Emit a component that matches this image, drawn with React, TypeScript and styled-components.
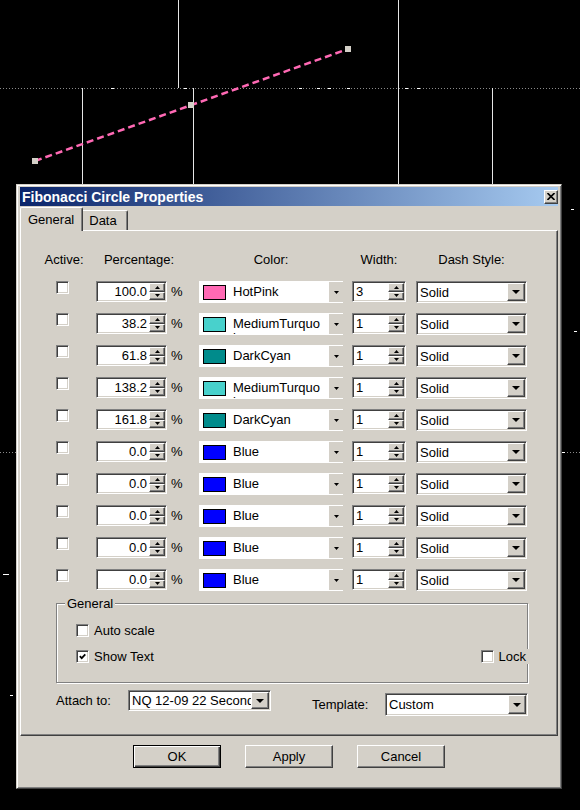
import React from 'react';
import styled, { createGlobalStyle, css } from 'styled-components';

const face = '#d4d0c8';

const GlobalStyle = createGlobalStyle`
  html, body {
    margin: 0;
    padding: 0;
    background: #000;
  }
  body {
    font-family: "Liberation Sans", Arial, sans-serif;
    font-size: 13px;
    color: #000;
  }
`;

const raised = css`
  background: ${face};
  border: 1px solid;
  border-color: #fff #404040 #404040 #fff;
  box-shadow: inset -1px -1px #808080;
`;

const sunken = css`
  background: #fff;
  border: 1px solid;
  border-color: #808080 #fff #fff #808080;
  box-shadow: inset 1px 1px #404040, inset -1px -1px ${face};
`;

const Screen = styled.div`
  position: relative;
  width: 580px;
  height: 810px;
  overflow: hidden;
  background: #000;
`;

const Chart = styled.svg`
  display: block;
`;

const Window = styled.div`
  position: absolute;
  left: 16px;
  top: 184px;
  width: 546px;
  height: 605px;
  box-sizing: border-box;
  display: flex;
  flex-direction: column;
  background: ${face};
  border: 1px solid;
  border-color: ${face} #404040 #404040 ${face};
  box-shadow: inset 1px 1px #fff, inset -1px -1px #808080;
  padding: 2px 3px 3px 3px;
`;

const TitleBar = styled.div`
  height: 19px;
  display: flex;
  align-items: center;
  padding-left: 2px;
  background: linear-gradient(90deg, #0a246a, #a6caf0);
`;

const TitleText = styled.span`
  color: #fff;
  font-weight: bold;
  font-size: 14px;
  line-height: 16px;
`;

const CloseButton = styled.span`
  ${raised};
  margin-left: auto;
  width: 14px;
  height: 14px;
  box-sizing: border-box;
  display: flex;
  align-items: center;
  justify-content: center;
`;

const TabStrip = styled.div`
  display: flex;
  align-items: flex-end;
  height: 24px;
`;

const Tab = styled.div<{ $active?: boolean }>`
  box-sizing: border-box;
  display: flex;
  align-items: center;
  background: ${face};
  border-top: 1px solid #fff;
  border-right: 1px solid #404040;
  border-top-right-radius: 2px;
  box-shadow: inset -1px 0 #808080;
  ${(p) =>
    p.$active
      ? css`
          position: relative;
          z-index: 1;
          height: 24px;
          margin-bottom: -1px;
          padding: 0 8px 0 7px;
          border-left: 1px solid #fff;
          border-top-left-radius: 2px;
        `
      : css`
          height: 20px;
          padding: 0 10px 0 6px;
        `}
`;

const Panel = styled.div`
  height: 506px;
  box-sizing: border-box;
  border: 1px solid;
  border-color: #fff #404040 #404040 #fff;
  box-shadow: inset -1px -1px #808080;
  padding: 21px 0 0 19px;
  display: flex;
  flex-direction: column;
  align-items: flex-start;
`;

const Table = styled.div`
  display: flex;
  flex-direction: column;
  gap: 10px;
`;

const Columns = styled.div`
  display: grid;
  grid-template-columns: 56px 103px 153px 64px 111px;
  align-items: start;
`;

const HeaderRow = styled(Columns)`
  height: 16px;
  margin-bottom: 3px;
`;

const LevelRow = styled(Columns)`
  height: 22px;
`;

const HeadLabel = styled.div<{ $w: number }>`
  width: ${(p) => p.$w}px;
  text-align: center;
  line-height: 16px;
`;

const CheckBox = styled.span`
  ${sunken};
  display: inline-flex;
  align-items: center;
  justify-content: center;
  width: 13px;
  height: 13px;
  box-sizing: border-box;
  flex-shrink: 0;
`;

const ActiveCell = styled.div`
  padding: 0 0 0 16px;
`;

const PctCell = styled.div`
  display: flex;
  align-items: center;
  gap: 4px;
  height: 21px;
`;

const SpinBox = styled.div<{ $w: number }>`
  ${sunken};
  width: ${(p) => p.$w}px;
  height: 21px;
  box-sizing: border-box;
  padding: 1px;
  display: flex;
`;

const SpinValue = styled.span<{ $align: 'left' | 'right' }>`
  flex: 1;
  min-width: 0;
  line-height: 17px;
  padding: 0 2px;
  text-align: ${(p) => p.$align};
  white-space: nowrap;
  overflow: hidden;
`;

const SpinButtons = styled.div`
  width: 16px;
  display: flex;
  flex-direction: column;
`;

const SpinButton = styled.span`
  ${raised};
  flex: 1;
  box-sizing: border-box;
  display: flex;
  align-items: center;
  justify-content: center;
`;

const ColorCombo = styled.div`
  width: 144px;
  height: 22px;
  box-sizing: border-box;
  background: #fff;
  display: flex;
  align-items: flex-start;
  padding-left: 4px;
`;

const Swatch = styled.span<{ $c: string }>`
  width: 23px;
  height: 15px;
  box-sizing: border-box;
  border: 1px solid #000;
  background: ${(p) => p.$c};
  margin-top: 4px;
  flex-shrink: 0;
`;

const ColorName = styled.span`
  width: 88px;
  height: 22px;
  box-sizing: border-box;
  margin-left: 7px;
  padding-top: 4px;
  line-height: 14px;
  overflow: hidden;
  word-break: break-all;
`;

const FlatDrop = styled.span`
  margin-left: auto;
  margin-top: 1px;
  width: 14px;
  height: 20px;
  background: ${face};
  display: flex;
  align-items: center;
  justify-content: center;
`;

const Combo = styled.div<{ $w: number; $h: number }>`
  ${sunken};
  width: ${(p) => p.$w}px;
  height: ${(p) => p.$h}px;
  box-sizing: border-box;
  padding: 1px;
  display: flex;
`;

const ComboText = styled.span`
  flex: 1;
  min-width: 0;
  overflow: hidden;
  white-space: nowrap;
  padding-left: 2px;
  display: flex;
  align-items: center;
`;

const DropButton = styled.span`
  ${raised};
  width: 18px;
  flex-shrink: 0;
  box-sizing: border-box;
  display: flex;
  align-items: center;
  justify-content: center;
`;

const Group = styled.fieldset`
  margin: 5px 0 0 16px;
  width: 472px;
  min-width: 0;
  box-sizing: border-box;
  padding: 0 0 18px 8px;
  border: 1px solid #808080;
  box-shadow: inset 1px 1px #fff, 1px 1px #fff;
`;

const GroupTitle = styled.legend`
  padding: 0 2px;
  line-height: 15px;
  background: ${face};
`;

const GroupLine = styled.div<{ $top: number }>`
  display: flex;
  align-items: center;
  justify-content: space-between;
  height: 15px;
  margin-top: ${(p) => p.$top}px;
  padding-left: 11px;
`;

const CheckLabel = styled.label`
  display: flex;
  align-items: center;
  gap: 5px;
  line-height: 15px;
`;

const LockLabel = styled(CheckLabel)`
  margin-right: -2px;
  padding-right: 3px;
  background: ${face};
`;

const BottomFields = styled.div`
  display: flex;
  align-items: flex-start;
  margin: 7px 0 0 16px;
`;

const Field = styled.div<{ $top?: number; $left?: number }>`
  display: flex;
  align-items: center;
  margin-top: ${(p) => p.$top ?? 0}px;
  margin-left: ${(p) => p.$left ?? 0}px;
`;

const FieldLabel = styled.span<{ $w: number }>`
  width: ${(p) => p.$w}px;
`;

const ButtonRow = styled.div`
  display: flex;
  justify-content: center;
  gap: 24px;
  padding-top: 9px;
`;

const PushButton = styled.button<{ $default?: boolean }>`
  width: 88px;
  height: 23px;
  box-sizing: border-box;
  padding: 0;
  font: inherit;
  color: #000;
  background: ${face};
  ${(p) =>
    p.$default
      ? css`
          border: 1px solid #000;
          box-shadow: inset 1px 1px #fff, inset -1px -1px #404040, inset -2px -2px #808080;
        `
      : css`
          border: 1px solid;
          border-color: #fff #404040 #404040 #fff;
          box-shadow: inset -1px -1px #808080;
        `}
`;

const ArrowSvg = styled.svg`
  display: block;
  flex-shrink: 0;
`;

const Arrow = ({ up, w = 5, h = 3 }: { up?: boolean; w?: number; h?: number }) => (
  <ArrowSvg width={w} height={h} viewBox={`0 0 ${w} ${h}`}>
    <polygon points={up ? `0,${h} ${w / 2},0 ${w},${h}` : `0,0 ${w},0 ${w / 2},${h}`} fill="#000" />
  </ArrowSvg>
);

const Check = ({ checked }: { checked?: boolean }) => (
  <CheckBox>
    {checked && (
      <ArrowSvg width="7" height="7" viewBox="0 0 7 7">
        <path d="M0.8 3.2 L2.7 5.2 L6.3 1.3" stroke="#000" strokeWidth="1.7" fill="none" />
      </ArrowSvg>
    )}
  </CheckBox>
);

const Spinner = ({ value, width, align }: { value: string; width: number; align: 'left' | 'right' }) => (
  <SpinBox $w={width}>
    <SpinValue $align={align}>{value}</SpinValue>
    <SpinButtons>
      <SpinButton>
        <Arrow up />
      </SpinButton>
      <SpinButton>
        <Arrow />
      </SpinButton>
    </SpinButtons>
  </SpinBox>
);

const DropCombo = ({ text, w, h }: { text: string; w: number; h: number }) => (
  <Combo $w={w} $h={h}>
    <ComboText>{text}</ComboText>
    <DropButton>
      <Arrow w={8} h={4} />
    </DropButton>
  </Combo>
);

const levels = [
  { pct: '100.0', color: '#ff69b4', name: 'HotPink', width: '3' },
  { pct: '38.2', color: '#48d1cc', name: 'MediumTurquoise', width: '1' },
  { pct: '61.8', color: '#008b8b', name: 'DarkCyan', width: '1' },
  { pct: '138.2', color: '#48d1cc', name: 'MediumTurquoise', width: '1' },
  { pct: '161.8', color: '#008b8b', name: 'DarkCyan', width: '1' },
  { pct: '0.0', color: '#0000ff', name: 'Blue', width: '1' },
  { pct: '0.0', color: '#0000ff', name: 'Blue', width: '1' },
  { pct: '0.0', color: '#0000ff', name: 'Blue', width: '1' },
  { pct: '0.0', color: '#0000ff', name: 'Blue', width: '1' },
  { pct: '0.0', color: '#0000ff', name: 'Blue', width: '1' },
];

const ticks = [111, 184, 299, 317, 328, 347, 405, 417];

const ChartBackground = () => (
  <Chart width="580" height="810" viewBox="0 0 580 810">
    <rect width="580" height="810" fill="#000" />
    <line x1="0" y1="88.5" x2="580" y2="88.5" stroke="#8a8a8a" strokeDasharray="1 2" />
    <line x1="0" y1="452.5" x2="580" y2="452.5" stroke="#8a8a8a" strokeDasharray="1 2" />
    <g stroke="#e6e6e6">
      <line x1="178.5" y1="0" x2="178.5" y2="88" />
      <line x1="398.5" y1="0" x2="398.5" y2="190" />
      <line x1="82.5" y1="88" x2="82.5" y2="190" />
      <line x1="193.5" y1="88" x2="193.5" y2="190" />
      <line x1="492.5" y1="88" x2="492.5" y2="190" />
    </g>
    <g stroke="#fff">
      {ticks.map((x) => (
        <line key={x} x1={x} y1="88.5" x2={x + 3} y2="88.5" />
      ))}
      <line x1="571" y1="209.5" x2="574" y2="209.5" />
      <line x1="574" y1="331.5" x2="577" y2="331.5" />
      <line x1="562" y1="452.5" x2="565" y2="452.5" />
      <line x1="3" y1="574.5" x2="9" y2="574.5" />
      <line x1="10" y1="695.5" x2="13" y2="695.5" />
    </g>
    <line x1="35" y1="161" x2="348" y2="49" stroke="#ff69b4" strokeWidth="2.5" strokeDasharray="7 4" />
    <g fill={face}>
      <rect x="32" y="158" width="6" height="6" />
      <rect x="188" y="102" width="6" height="6" />
      <rect x="345" y="46" width="6" height="6" />
    </g>
  </Chart>
);

export default function App() {
  return (
    <Screen>
      <GlobalStyle />
      <ChartBackground />
      <Window>
        <TitleBar>
          <TitleText>Fibonacci Circle Properties</TitleText>
          <CloseButton>
            <ArrowSvg width="8" height="7" viewBox="0 0 8 7">
              <path d="M0.5 0 L7.5 7 M7.5 0 L0.5 7" stroke="#000" strokeWidth="1.6" />
            </ArrowSvg>
          </CloseButton>
        </TitleBar>

        <TabStrip>
          <Tab $active>General</Tab>
          <Tab>Data</Tab>
        </TabStrip>

        <Panel>
          <Table>
            <HeaderRow>
              <HeadLabel $w={48}>Active:</HeadLabel>
              <HeadLabel $w={86}>Percentage:</HeadLabel>
              <HeadLabel $w={144}>Color:</HeadLabel>
              <HeadLabel $w={54}>Width:</HeadLabel>
              <HeadLabel $w={111}>Dash Style:</HeadLabel>
            </HeaderRow>
            {levels.map((lvl, i) => (
              <LevelRow key={i}>
                <ActiveCell>
                  <Check />
                </ActiveCell>
                <PctCell>
                  <Spinner value={lvl.pct} width={71} align="right" />
                  <span>%</span>
                </PctCell>
                <ColorCombo>
                  <Swatch $c={lvl.color} />
                  <ColorName>{lvl.name}</ColorName>
                  <FlatDrop>
                    <Arrow />
                  </FlatDrop>
                </ColorCombo>
                <Spinner value={lvl.width} width={54} align="left" />
                <DropCombo text="Solid" w={111} h={22} />
              </LevelRow>
            ))}
          </Table>

          <Group>
            <GroupTitle>General</GroupTitle>
            <GroupLine $top={12}>
              <CheckLabel>
                <Check />
                Auto scale
              </CheckLabel>
            </GroupLine>
            <GroupLine $top={11}>
              <CheckLabel>
                <Check checked />
                Show Text
              </CheckLabel>
              <LockLabel>
                <Check />
                Lock
              </LockLabel>
            </GroupLine>
          </Group>

          <BottomFields>
            <Field>
              <FieldLabel $w={72}>Attach to:</FieldLabel>
              <DropCombo text="NQ 12-09 22 Second" w={143} h={21} />
            </Field>
            <Field $top={3} $left={41}>
              <FieldLabel $w={73}>Template:</FieldLabel>
              <DropCombo text="Custom" w={143} h={23} />
            </Field>
          </BottomFields>
        </Panel>

        <ButtonRow>
          <PushButton $default>OK</PushButton>
          <PushButton>Apply</PushButton>
          <PushButton>Cancel</PushButton>
        </ButtonRow>
      </Window>
    </Screen>
  );
}
